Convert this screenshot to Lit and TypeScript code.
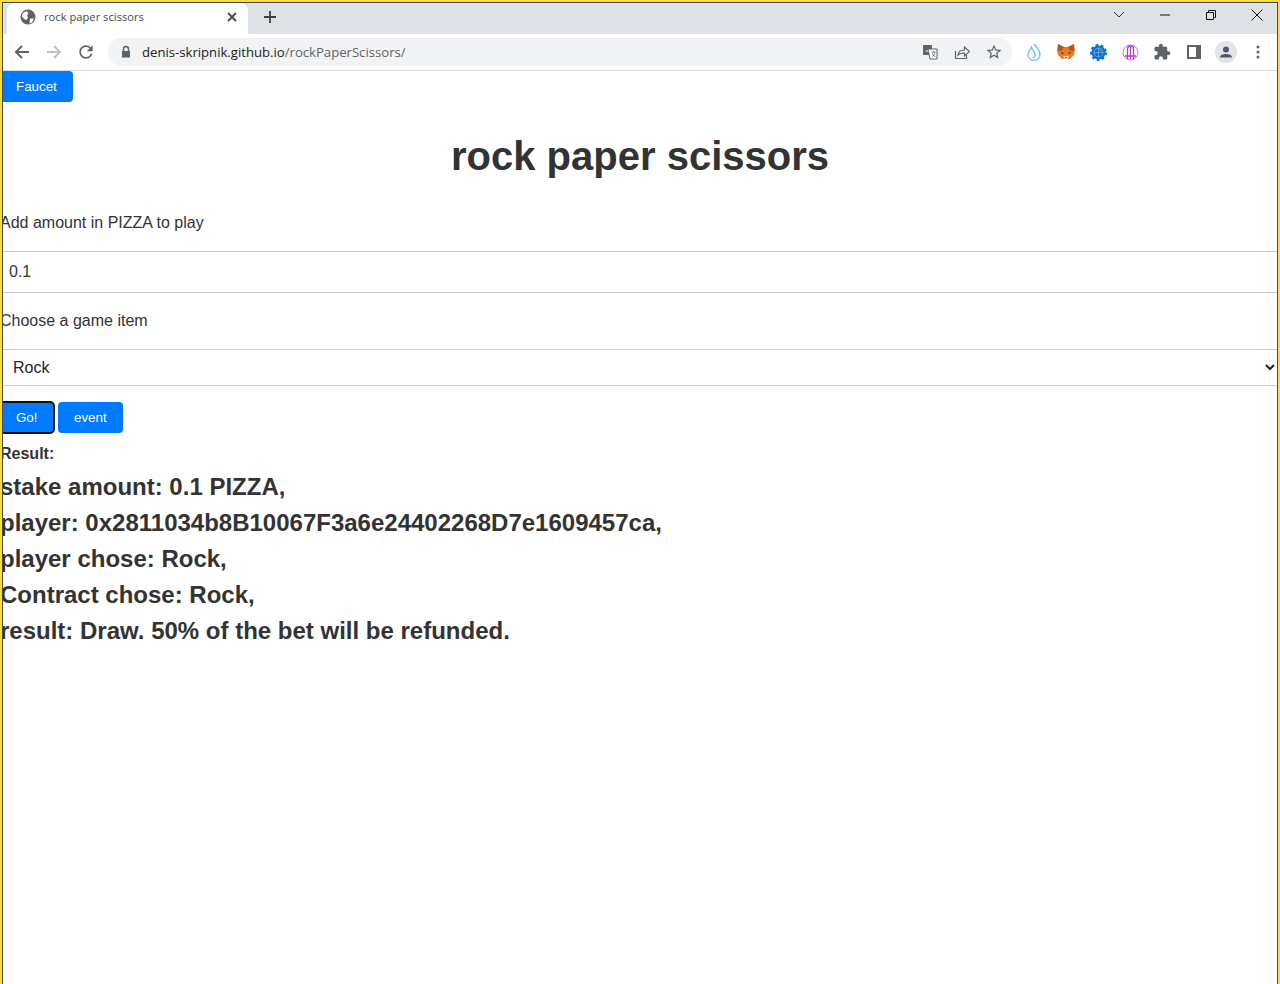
import { LitElement, html, css } from "lit";
import { customElement } from "lit/decorators.js";

@customElement("app-root")
export class AppRoot extends LitElement {
  static styles = css`
    :host { display: block; height: 984px; position: relative; box-sizing: border-box; background: #fff; font-family: "Liberation Sans", Arial, sans-serif; color: #333; overflow: hidden; }
    .frame { position: absolute; inset: 0; pointer-events: none; border: solid #fbdc3c; border-width: 2px 2px 0 2px; box-sizing: border-box; }
    .frame::after { content: ""; position: absolute; top: 0; right: 0; bottom: 0; left: 0; border: solid #4a4a48; border-width: 1px 1px 0 1px; }
    .chrome { padding: 2px 0 0 2px; }
    .tabs { height: 32px; background: #dee1e6; display: flex; align-items: flex-end; }
    .tab { width: 241px; height: 31px; margin-left: 5px; background: #fff; border-radius: 8px 8px 0 0; display: flex; align-items: center; box-sizing: border-box; padding: 0 11px 4px 13px; font: 11.2px "Open Sans", sans-serif; color: #45494d; }
    .tab span { margin-left: 8px; flex: 1; }
    .plus { margin-left: 16px; align-self: center; display: flex; margin-top: -2px; }
    .win { margin-left: auto; display: flex; align-self: flex-start; }
    .win div { width: 46px; height: 25px; display: flex; align-items: center; justify-content: center; }
    .toolbar { height: 36px; display: flex; align-items: center; background: #fff; border-bottom: 1px solid #d9dadc; }
    .nav { width: 32px; height: 32px; display: flex; align-items: center; justify-content: center; }
    .first { margin-left: 4px; }
    .omni { margin-left: 6px; width: 904px; height: 28px; background: #f1f3f4; border-radius: 14px; display: flex; align-items: center; font: 13.14px "Open Sans", sans-serif; padding: 0 2px 0 12px; box-sizing: border-box; color: #5f6368; }
    .omni b { font-weight: 400; color: #202124; }
    .url { margin-left: 10px; flex: 1; }
    .ext { margin-left: 6px; display: flex; }
    .btn { display: inline-block; border: 0; border-radius: 4px; background: #007bff; color: #fff; font: 13.33px "Liberation Sans", Arial, sans-serif; height: 31px; padding: 0 16px; box-sizing: border-box; }
    h1 { margin: 0; text-align: center; font-size: 40px; font-weight: 700; line-height: 44px; padding-top: 32px; }
    .label { font-size: 16px; line-height: 24px; margin-top: 33px; }
    .label.next { margin-top: 16px; }
    .input { display: block; height: 42px; width: 100%; margin-top: 16px; box-sizing: border-box; border: solid #ccc; border-width: 1px 0; font: 16px "Liberation Sans", Arial, sans-serif; color: #333; padding: 0 9px; background: #fff; outline: none; }
    .select { display: block; height: 37px; width: calc(100% - 2px); margin-top: 16px; box-sizing: border-box; border: solid #ccc; border-width: 1px 0; border-radius: 0; padding: 0 9px; font: 16px "Liberation Sans", Arial, sans-serif; color: #212529; background: #fff; outline: none; }
    .btns { display: flex; gap: 4px; margin-top: 16px; }
    .go { outline: 2px solid #111; outline-offset: -1px; min-width: 54px; width: 54px; padding: 0 0 0 16px; text-align: left; }
    .result { font-size: 16px; font-weight: 700; line-height: 24px; margin: 9px 0 3px; }
    .big { font-size: 24px; font-weight: 700; line-height: 36px; }
  `;

  render() {
    return html`
      <div class="chrome">
        <div class="tabs">
          <div class="tab">
            <svg width="16" height="16" viewBox="0 0 16 16"><circle cx="8" cy="8" r="7.500" fill="#5f6368"/><path d="M2.500 4.500 6.500 2 8.500 4 7 6.500 8 8.500 6.500 11 4 10 1.800 7ZM10 9.500h4l-2 4-2.500 1Z" fill="#fff"/></svg>
            <span>rock paper scissors</span>
            <svg width="10" height="10" viewBox="0 0 10 10"><path d="M1 1l8 8M9 1l-8 8" stroke="#45494d" stroke-width="1.800"/></svg>
          </div>
          <div class="plus"><svg width="12" height="12" viewBox="0 0 12 12"><path d="M6 0v12M0 6h12" stroke="#3c4043" stroke-width="1.800"/></svg></div>
          <div class="win">
            <div><svg width="12" height="8" viewBox="0 0 12 8"><path d="M1 1l5 5 5-5" fill="none" stroke="#333"/></svg></div>
            <div><svg width="10" height="2" viewBox="0 0 10 2"><path d="M0 1h10" stroke="#111"/></svg></div>
            <div><svg width="10" height="10" viewBox="0 0 10 10"><path d="M.5 2.500h7v7h-7zM2.500 2.500v-2h7v7h-2" fill="none" stroke="#111"/></svg></div>
            <div><svg width="12" height="12" viewBox="0 0 12 12"><path d="M.5.5l11 11M11.500.5l-11 11" stroke="#111"/></svg></div>
          </div>
        </div>
        <div class="toolbar">
          <div class="nav first"><svg width="16" height="16" viewBox="0 0 16 16"><path d="M15 8H2M8 2 2 8l6 6" fill="none" stroke="#5f6368" stroke-width="2"/></svg></div>
          <div class="nav"><svg width="16" height="16" viewBox="0 0 16 16"><path d="M1 8h13M8 2l6 6-6 6" fill="none" stroke="#bdc1c6" stroke-width="2"/></svg></div>
          <div class="nav"><svg width="20" height="20" viewBox="0 0 24 24"><path fill="#5f6368" d="M17.650 6.350C16.200 4.900 14.210 4 12 4c-4.420 0-7.990 3.580-7.990 8s3.570 8 7.990 8c3.730 0 6.840-2.550 7.730-6h-2.080c-.82 2.330-3.040 4-5.650 4-3.310 0-6-2.690-6-6s2.690-6 6-6c1.660 0 3.140.69 4.220 1.780L13 11h7V4l-2.350 2.350z"/></svg></div>
          <div class="omni">
            <svg width="12" height="14" viewBox="0 0 12 14"><path d="M2 6h8v6.500H2z" fill="#5f6368"/><path d="M3.500 6V4a2.500 2.500 0 0 1 5 0v2" fill="none" stroke="#5f6368" stroke-width="1.500"/></svg>
            <div class="url"><b>denis-skripnik.github.io</b>/rockPaperScissors/</div>
            <div class="nav"><svg width="16" height="16" viewBox="0 0 16 16"><rect x="1" y="1" width="9" height="10" rx="1" fill="#5f6368"/><path d="M6 5h9v10H8z" fill="#fff" stroke="#5f6368"/><path d="M9.500 8h4M11.500 7v1M10 12.500c2-1 3-2.500 3-4.500M10.500 9.500c.5 1.500 1.500 2.500 3 3" fill="none" stroke="#5f6368" stroke-width=".8"/><path d="M3.500 7h3" stroke="#fff"/></svg></div>
            <div class="nav"><svg width="16" height="16" viewBox="0 0 16 16"><path d="M1.500 7v7.500h11V11" fill="none" stroke="#5f6368" stroke-width="1.200"/><path d="M4 11c.5-3.500 3-5 6.500-5V3l5 4.500-5 4.500V9c-3 0-5 .5-6.500 2Z" fill="none" stroke="#5f6368" stroke-width="1.200"/></svg></div>
            <div class="nav"><svg width="18" height="18" viewBox="0 0 24 24"><path fill="#5f6368" d="M22 9.240l-7.190-.62L12 2 9.190 8.630 2 9.240l5.460 4.730L5.820 21 12 17.270 18.180 21l-1.630-7.030L22 9.240zM12 15.400l-3.760 2.270 1-4.280-3.320-2.880 4.380-.38L12 6.100l1.710 4.040 4.380.38-3.320 2.880 1 4.280L12 15.400z"/></svg></div>
          </div>
          <div class="ext">
            <div class="nav"><svg width="14" height="18" viewBox="0 0 14 18"><path d="M7 1c2.500 3.500 6 6 6 10.500a6 6 0 0 1-12 0C1 9 3 7 4.500 4.500c.5 2.500 3 4 3.500 6.500s-.5 3.500-2.500 4" fill="none" stroke="#7cc4f5" stroke-width="1.500"/></svg></div>
            <div class="nav"><svg width="18" height="16" viewBox="0 0 18 16"><path d="M1 0l6 3h4l6-3 1 6-1 5-4 4H5l-4-4-1-5Z" fill="#ee7b22"/><path d="M1 0l6 3-2 4-4 0ZM17 0l-6 3 2 4 4 0Z" fill="#a95c25"/><path d="M6 12h6l-1.500 3h-3Z" fill="#eadbc8"/><path d="M8 13h2l-1 1.500Z" fill="#3a2a20"/><path d="M4 8l3 1-2 1ZM14 8l-3 1 2 1Z" fill="#3a2a20"/></svg></div>
            <div class="nav"><svg width="17" height="17" viewBox="0 0 17 17"><circle cx="8.500" cy="8.500" r="7" fill="#0a72d0"/><circle cx="8.500" cy="8.500" r="7" fill="none" stroke="#0a72d0" stroke-width="3" stroke-dasharray="2.500 2.500"/><circle cx="8.500" cy="8.500" r="4.500" fill="none" stroke="#74b3ea" stroke-width=".8"/><path d="M4 8.500h9M8.500 4v9" stroke="#74b3ea" stroke-width=".8"/><circle cx="10.500" cy="6" r="1" fill="#3fbf7f"/></svg></div>
            <div class="nav"><svg width="17" height="17" viewBox="0 0 17 17"><circle cx="8.500" cy="8.500" r="7.500" fill="none" stroke="#d56cc8"/><path d="M5.500 15V5a3 3 0 0 1 6 0v10M8.500 3v12M3 12h11" fill="none" stroke="#b13fd0" stroke-width="1.300"/></svg></div>
            <div class="nav"><svg width="18" height="18" viewBox="0 0 24 24"><path fill="#5f6368" d="M20.500 11H19V7c0-1.100-.9-2-2-2h-4V3.500C13 2.120 11.880 1 10.500 1S8 2.120 8 3.500V5H4c-1.100 0-1.990.9-1.990 2v3.800H3.500c1.490 0 2.700 1.210 2.700 2.700s-1.210 2.700-2.700 2.700H2V20c0 1.100.9 2 2 2h3.800v-1.500c0-1.490 1.210-2.700 2.700-2.700 1.490 0 2.700 1.210 2.700 2.700V22H17c1.100 0 2-.9 2-2v-4h1.500c1.380 0 2.500-1.120 2.500-2.500S21.880 11 20.500 11z"/></svg></div>
            <div class="nav"><svg width="14" height="14" viewBox="0 0 14 14"><path d="M1 1h12v12H1z" fill="#fff" stroke="#5f6368" stroke-width="2"/><path d="M9 1h4v12H9z" fill="#5f6368"/></svg></div>
            <div class="nav"><svg width="22" height="22" viewBox="0 0 22 22"><circle cx="11" cy="11" r="11" fill="#e2e4e8"/><circle cx="11" cy="8.500" r="3" fill="#50586a"/><path d="M5 16.500c0-2.500 3-3.500 6-3.500s6 1 6 3.500Z" fill="#50586a"/></svg></div>
            <div class="nav"><svg width="4" height="14" viewBox="0 0 4 14"><circle cx="2" cy="2" r="1.500" fill="#5f6368"/><circle cx="2" cy="7" r="1.500" fill="#5f6368"/><circle cx="2" cy="12" r="1.500" fill="#5f6368"/></svg></div>
          </div>
        </div>
      </div>
      <div class="page">
        <button class="btn">Faucet</button>
        <h1>rock paper scissors</h1>
        <div class="label">Add amount in PIZZA to play</div>
        <input class="input" value="0.1" />
        <div class="label next">Choose a game item</div>
        <select class="select"><option>Rock</option></select>
        <div class="btns"><button class="btn go">Go!</button><button class="btn">event</button></div>
        <div class="result">Result:</div>
        <div class="big">stake amount: 0.1 PIZZA,</div>
        <div class="big">player: 0x2811034b8B10067F3a6e24402268D7e1609457ca,</div>
        <div class="big">player chose: Rock,</div>
        <div class="big">Contract chose: Rock,</div>
        <div class="big">result: Draw. 50% of the bet will be refunded.</div>
      </div>
      <div class="frame"></div>
    `;
  }
}
